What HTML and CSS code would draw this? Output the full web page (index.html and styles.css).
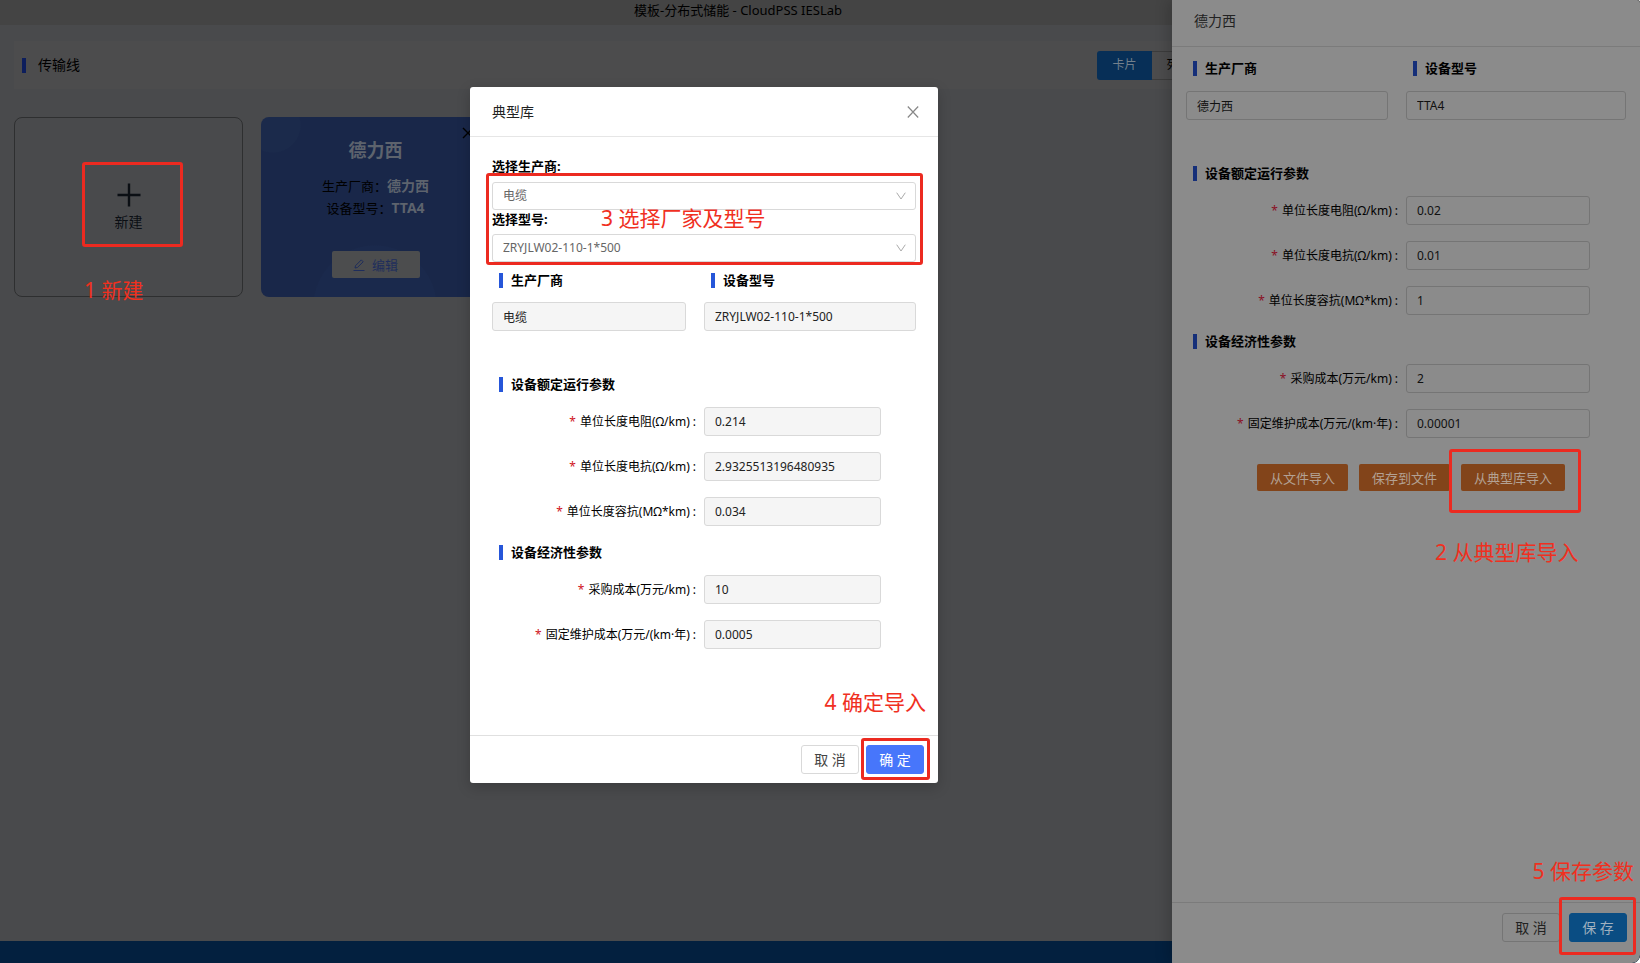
FILE: index.html
```html
<!DOCTYPE html>
<html lang="zh-CN">
<head>
<meta charset="utf-8">
<title>模板-分布式储能 - CloudPSS IESLab</title>
<link rel="stylesheet" href="styles.css">
</head>
<body>
<div class="app">
  <header class="topbar">模板-分布式储能 - CloudPSS IESLab</header>
  <main class="page">
    <div class="page-head">
      <h1 class="page-title">传输线</h1>
      <div class="toggle">
        <button class="toggle-btn active" type="button">卡片</button><button class="toggle-btn" type="button">列表</button>
      </div>
    </div>
    <div class="cards">
      <div class="card card-new">
        <button class="new-btn" type="button">
          <svg width="24" height="24" viewBox="0 0 24 24"><path d="M12 0.5v23M0.5 12h23" stroke="currentColor" stroke-width="2.4" fill="none"/></svg>
          <span>新建</span>
        </button>
        <div class="mark mark-new"></div>
        <div class="note note-new">1 新建</div>
      </div>
      <div class="card card-device">
        <button class="card-close" type="button" aria-label="删除">
          <svg width="12" height="12" viewBox="0 0 12 12"><path d="M1 1l10 10M11 1L1 11" stroke="currentColor" stroke-width="1.4"/></svg>
        </button>
        <h2 class="device-name">德力西</h2>
        <p class="device-line">生产厂商：<b>德力西</b></p>
        <p class="device-line">设备型号：<b>TTA4</b></p>
        <button class="edit-btn" type="button">
          <svg width="12" height="12" viewBox="0 0 12 12" fill="none" stroke="currentColor"><path d="M0.5 11.5h11M2 9l.5-2.300L8.300.9l1.900 1.900L4.400 8.500z"/></svg>
          编辑
        </button>
      </div>
    </div>
  </main>
  <footer class="bottombar"></footer>

  <aside class="drawer">
    <header class="drawer-head">德力西</header>
    <form class="drawer-body">
      <div class="pair">
        <div class="pair-item"><label class="section" for="d-maker">生产厂商</label><input class="field" id="d-maker" value="德力西"></div>
        <div class="pair-item"><label class="section" for="d-model">设备型号</label><input class="field" id="d-model" value="TTA4"></div>
      </div>
      <h3 class="section">设备额定运行参数</h3>
      <div class="rows">
        <div class="row"><label for="d-r">单位长度电阻(Ω/km)</label><input class="field" id="d-r" value="0.02"></div>
        <div class="row"><label for="d-x">单位长度电抗(Ω/km)</label><input class="field" id="d-x" value="0.01"></div>
        <div class="row"><label for="d-c">单位长度容抗(MΩ*km)</label><input class="field" id="d-c" value="1"></div>
      </div>
      <h3 class="section">设备经济性参数</h3>
      <div class="rows">
        <div class="row"><label for="d-p">采购成本(万元/km)</label><input class="field" id="d-p" value="2"></div>
        <div class="row"><label for="d-m">固定维护成本(万元/(km·年)</label><input class="field" id="d-m" value="0.00001"></div>
      </div>
      <div class="imports">
        <button class="import-btn" type="button">从文件导入</button>
        <button class="import-btn" type="button">保存到文件</button>
        <button class="import-btn" type="button">从典型库导入</button>
        <div class="mark mark-import"></div>
        <div class="note note-import">2 从典型库导入</div>
      </div>
    </form>
    <footer class="drawer-foot">
      <button class="btn btn-dim" type="button">取 消</button>
      <button class="btn btn-save" type="button">保 存</button>
      <div class="mark mark-save"></div>
      <div class="note note-save">5 保存参数</div>
    </footer>
  </aside>

  <div class="modal" role="dialog" aria-labelledby="modal-title">
    <header class="modal-head">
      <h2 class="modal-title" id="modal-title">典型库</h2>
      <button class="modal-close" type="button" aria-label="关闭">
        <svg width="12" height="12" viewBox="0 0 12 12"><path d="M0.800.5l10.400 11M11.200.5L.8 11.500" stroke="currentColor" stroke-width="1.200"/></svg>
      </button>
    </header>
    <form class="modal-body">
      <div class="pickers">
        <label class="pick-label" for="m-pick-maker">选择生产商:</label>
        <div class="pick">
          <select id="m-pick-maker"><option>电缆</option></select>
          <svg class="chevron" width="10" height="8" viewBox="0 0 10 8"><path d="M.7.7L5 7L9.300.7" fill="none" stroke="currentColor"/></svg>
        </div>
        <label class="pick-label" for="m-pick-model">选择型号:</label>
        <div class="pick">
          <select id="m-pick-model"><option>ZRYJLW02-110-1*500</option></select>
          <svg class="chevron" width="10" height="8" viewBox="0 0 10 8"><path d="M.7.7L5 7L9.300.7" fill="none" stroke="currentColor"/></svg>
        </div>
        <div class="mark mark-pick"></div>
        <div class="note note-pick">3 选择厂家及型号</div>
      </div>
      <div class="pair">
        <div class="pair-item"><label class="section" for="m-maker">生产厂商</label><input class="field" id="m-maker" value="电缆" readonly></div>
        <div class="pair-item"><label class="section" for="m-model">设备型号</label><input class="field" id="m-model" value="ZRYJLW02-110-1*500" readonly></div>
      </div>
      <h3 class="section">设备额定运行参数</h3>
      <div class="rows">
        <div class="row"><label for="m-r">单位长度电阻(Ω/km)</label><input class="field" id="m-r" value="0.214" readonly></div>
        <div class="row"><label for="m-x">单位长度电抗(Ω/km)</label><input class="field" id="m-x" value="2.9325513196480935" readonly></div>
        <div class="row"><label for="m-c">单位长度容抗(MΩ*km)</label><input class="field" id="m-c" value="0.034" readonly></div>
      </div>
      <h3 class="section">设备经济性参数</h3>
      <div class="rows">
        <div class="row"><label for="m-p">采购成本(万元/km)</label><input class="field" id="m-p" value="10" readonly></div>
        <div class="row"><label for="m-m">固定维护成本(万元/(km·年)</label><input class="field" id="m-m" value="0.0005" readonly></div>
      </div>
    </form>
    <footer class="modal-foot">
      <button class="btn" type="button">取 消</button>
      <button class="btn btn-primary" type="button">确 定</button>
      <div class="mark mark-ok"></div>
      <div class="note note-ok">4 确定导入</div>
    </footer>
  </div>
</div>
</body>
</html>
```
FILE: styles.css
```css
* { box-sizing: border-box; }
html { background: #fff; }
body {
  margin: 0;
  font: 12px/20px "Noto Sans", "Noto Sans CJK SC", sans-serif;
  color: #000;
}
h1, h2, h3, p { margin: 0; font-weight: 400; }
button, input, select { font: inherit; color: inherit; margin: 0; padding: 0; }
button { border: 0; background: none; cursor: pointer; }

.app {
  position: relative;
  display: flex;
  flex-direction: column;
  min-height: 100vh;
  overflow: hidden;
  background: #494a4c;
  border-radius: 0 3px 8px 0;
}
.topbar {
  height: 25px;
  padding-right: 164px;
  background: #444;
  font-size: 13px;
  text-align: center;
}
.page { flex: 1; padding: 16px 14px; }
.page-head {
  display: flex;
  align-items: center;
  height: 48px;
  padding-left: 8px;
  background: #4c4c4d;
}
.page-title {
  flex: 1;
  display: flex;
  align-items: center;
  gap: 12px;
  font-size: 14px;
}
.page-title::before { content: ""; width: 4px; height: 15px; background: #0d1e5c; }
.toggle { display: flex; margin-right: 420px; }
.toggle-btn {
  width: 54px;
  height: 29px;
  border: 1px solid #3c3c3c;
  border-left: 0;
}
.toggle-btn.active {
  width: 55px;
  border: 0;
  border-radius: 3px 0 0 3px;
  background: #072f57;
  color: #72808c;
}

.cards { display: flex; gap: 18px; margin-top: 28px; }
.card { position: relative; width: 229px; height: 180px; border-radius: 8px; }
.card-new {
  display: flex;
  align-items: center;
  justify-content: center;
  border: 1px solid #2e2f30;
}
.new-btn {
  display: flex;
  flex-direction: column;
  align-items: center;
  gap: 5px;
  font-size: 14px;
  color: #0b0f14;
}
.card-device {
  display: flex;
  flex-direction: column;
  align-items: center;
  padding-top: 22px;
  background:
    radial-gradient(circle at 12px 8px, #1b2a4b 27px, transparent 28px),
    radial-gradient(circle at 114px 190px, #1a294c 61px, transparent 62px),
    #192749;
}
.card-close { position: absolute; top: 10px; right: 16px; height: 12px; line-height: 0; }
.device-name { margin-bottom: 14px; font-size: 18px; line-height: 22px; font-weight: 700; color: #5d636d; }
.device-line { font-size: 13px; line-height: 22px; }
.device-line b { font-size: 14px; color: #5d636d; }
.edit-btn {
  display: flex;
  align-items: center;
  justify-content: center;
  gap: 7px;
  width: 88px;
  height: 27px;
  margin-top: 32px;
  border-radius: 2px;
  background: #4c4d4e;
  color: #1e2d5c;
  font-size: 13px;
}
.bottombar { height: 22px; background: #03203f; }

.section {
  display: flex;
  align-items: center;
  gap: 8px;
  height: 16px;
  margin-left: 7px;
  font-size: 13px;
  font-weight: 700;
}
.section::before { content: ""; width: 4px; height: 15px; background: #2656d9; }
.field {
  width: 100%;
  height: 29px;
  padding: 0 10px;
  border: 1px solid #d9d9d9;
  border-radius: 3px;
  background: #f5f5f5;
  color: #222;
}
.pair { display: grid; grid-template-columns: 194fr 212fr; column-gap: 18px; margin-bottom: 45px; }
.pair-item { display: flex; flex-direction: column; gap: 14px; }
.rows { display: grid; gap: 16px; margin: 15px 0 18px; }
.row { display: grid; grid-template-columns: 194fr 212fr; column-gap: 18px; align-items: center; }
.row label { margin-right: -11px; text-align: right; white-space: nowrap; }
.row label::before { content: "*"; margin-right: 4px; color: #cf1322; }
.row label::after { content: ":"; margin: 0 1px 0 3px; }
.row .field { width: 83.5%; }

.drawer {
  position: absolute;
  inset: 0 0 0 auto;
  display: flex;
  flex-direction: column;
  width: 468px;
  border-radius: 0 3px 8px 0;
  background: #8b8b8b;
  box-shadow: -4px 0 14px rgba(0, 0, 0, .18);
}
.drawer-head {
  height: 47px;
  padding: 11px 22px;
  border-bottom: 1px solid #7b7b7b;
  font-size: 14px;
  color: #222;
}
.drawer-body { flex: 1; padding: 13px 14px; }
.drawer .section::before { background: #152f79; }
.drawer .field { background: transparent; border-color: #757575; color: #111; }
.drawer .pair, .drawer .row { grid-template-columns: 202fr 220fr; }
.drawer .pair-item { gap: 15px; }
.drawer .rows label::before { color: #8a0f24; }
.imports { position: relative; display: flex; gap: 11px; margin: 26px 0 0 71px; }
.import-btn {
  height: 27px;
  padding: 0 13px;
  border-radius: 2px;
  background: #82441a;
  color: #b3a193;
  font-size: 13px;
}
.drawer-foot {
  position: relative;
  display: flex;
  justify-content: flex-end;
  gap: 9px;
  height: 61px;
  padding: 10px 13px;
  border-top: 1px solid #7b7b7b;
}
.btn {
  width: 58px;
  height: 29px;
  border: 1px solid #d9d9d9;
  border-radius: 3px;
  color: #444;
  font-size: 14px;
}
.btn-primary { border-color: #4776fb; background: #4776fb; color: #fff; }
.btn-dim { border-color: #757575; color: #222; }
.btn-save { border-color: #0a4d83; background: #0a4d83; color: #9fb0bf; }

.modal {
  position: absolute;
  top: 87px;
  left: 470px;
  width: 468px;
  border-radius: 3px;
  background: #fff;
  box-shadow: 0 4px 14px rgba(0, 0, 0, .2);
}
.modal-head {
  display: flex;
  align-items: center;
  justify-content: space-between;
  height: 50px;
  padding: 0 19px 0 22px;
  border-bottom: 1px solid #e6e6e6;
}
.modal-title { font-size: 14px; color: #222; }
.modal-close { height: 12px; line-height: 0; color: #888; }
.modal-body { padding: 19px 22px 68px; }
.pickers { position: relative; margin-bottom: 10px; }
.pick-label { display: block; height: 24px; font-weight: 700; font-size: 13px; line-height: 18px; }
.pick-label:first-child { height: 26px; line-height: 20px; }
.pick { position: relative; height: 28px; }
.pick select {
  width: 100%;
  height: 28px;
  padding: 0 10px;
  appearance: none;
  border: 1px solid #d9d9d9;
  border-radius: 3px;
  background: #fff;
  color: #666;
}
.chevron { position: absolute; top: 10px; right: 10px; color: #aaa; pointer-events: none; }
.modal-foot {
  position: relative;
  display: flex;
  justify-content: flex-end;
  gap: 7px;
  height: 48px;
  padding: 9px 14px;
  border-top: 1px solid #e0e0e0;
}

/* Numbered walkthrough marks */
.mark { position: absolute; border: 3px solid #ec2a20; border-radius: 3px; pointer-events: none; }
.note { position: absolute; color: #f0301f; font-size: 21px; line-height: 28px; white-space: nowrap; }
.mark-new { left: 67px; top: 44px; width: 101px; height: 85px; }
.note-new { left: 69px; top: 158px; }
.mark-import { left: 192px; top: -15px; width: 132px; height: 64px; }
.note-import { left: 178px; top: 74px; }
.mark-save { right: 4px; top: -6px; width: 77px; height: 58px; }
.note-save { right: 6px; top: -46px; }
.mark-pick { inset: 17px -7px -3px -6px; }
.note-pick { left: 109px; top: 48px; }
.mark-ok { right: 8px; top: 2px; width: 69px; height: 42px; }
.note-ok { right: 12px; top: -48px; }
```
